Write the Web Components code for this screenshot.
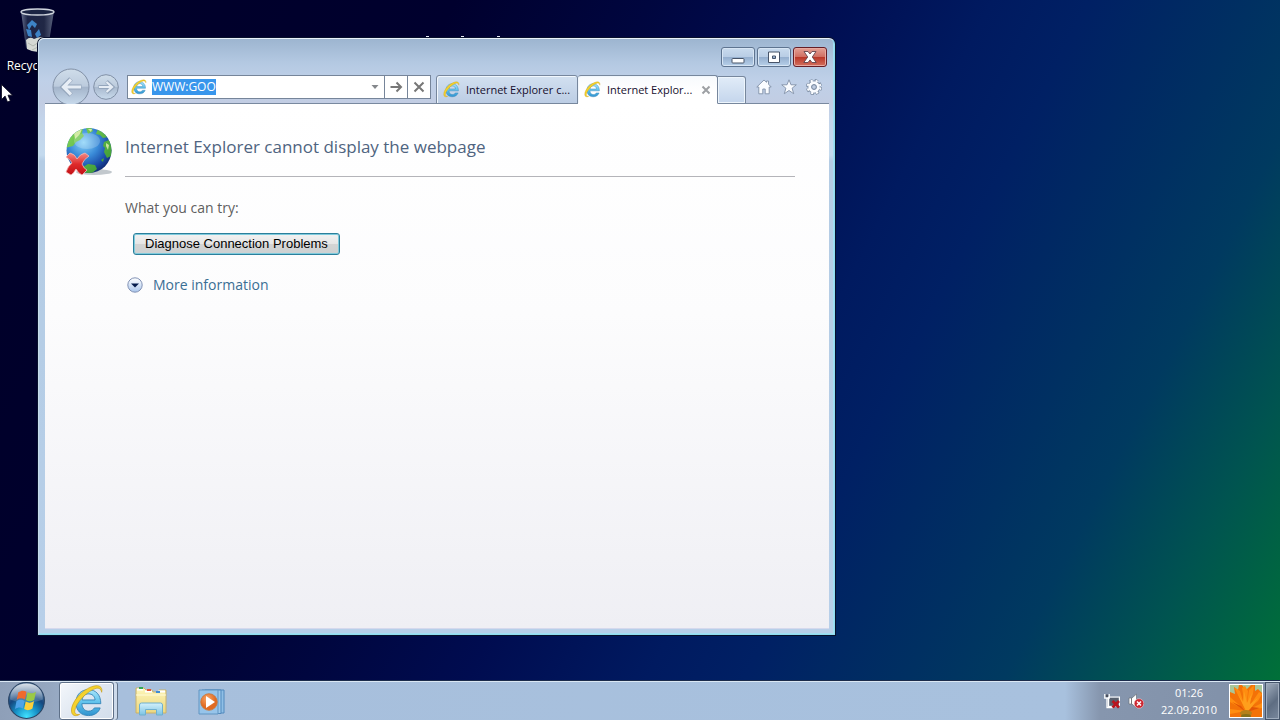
<!DOCTYPE html>
<html lang="en">
<head>
<meta charset="utf-8">
<title>Desktop</title>
<style>
html, body { height: 100%; margin: 0; }
body { font-family: "Open Sans", "Noto Sans", sans-serif; font-size: 12px; overflow: hidden; }
</style>
</head>
<body>
<win-desktop>
  <desktop-icon slot="icons" label="Recycle Bin"></desktop-icon>
  <browser-window slot="windows">
    <nav-bar slot="nav">
      <browser-tab slot="tabs">Internet Explorer c...</browser-tab>
      <browser-tab slot="tabs" active>Internet Explor...</browser-tab>
    </nav-bar>
    <error-page></error-page>
  </browser-window>
  <task-bar slot="taskbar"></task-bar>
</win-desktop>

<script>
const define = (name, html, setup) => {
  const template = document.createElement('template');
  template.innerHTML = html;
  customElements.define(name, class extends HTMLElement {
    connectedCallback() {
      if (this.shadowRoot) return;
      const root = this.attachShadow({ mode: 'open' });
      root.append(template.content.cloneNode(true));
      if (setup) setup.call(this, root);
    }
  });
};

const icons = {
  ie: `<svg viewBox="0 0 32 32"><defs><linearGradient id="b" x2="0" y2="1"><stop stop-color="#a8e4fa"/><stop offset=".5" stop-color="#5fc2ec"/><stop offset="1" stop-color="#2f93cf"/></linearGradient></defs>
    <path fill="url(#b)" stroke="#2f7fb4" stroke-width=".8" d="M29 18.500H11.200c.3 4.400 2.600 7 6.200 7 2.700 0 4.600-1.100 5.500-3h5.500C26.900 27 23 29.700 17.300 29.700 10.300 29.700 5.600 25 5.600 17.500S10.500 5.300 17.300 5.300 29 10 29 18.500zM11.400 15h12.200c-.4-3.600-2.600-5.700-6.100-5.700-3.400 0-5.500 2.100-6.100 5.700z"/>
    <path fill="#f5d22c" stroke="#c59a16" stroke-width=".6" d="M29.800 7.800C30.700 4 28.800 1.200 24.500 1.600 14.500 2.500 1 15.500 1.400 25.500c.2 4.200 3.500 5.500 7.700 3.100-3.300.6-5-.8-4.600-3.600C5.500 17.700 16.700 6.200 24.500 4.100c2.900-.8 4.700.7 5.300 3.700z"/></svg>`,
  back: `<svg viewBox="0 0 38 38"><defs><linearGradient id="g" x2="0" y2="1"><stop stop-color="#cfddea"/><stop offset=".48" stop-color="#bccbdd"/><stop offset=".5" stop-color="#a3b4ca"/><stop offset="1" stop-color="#c9dbed"/></linearGradient></defs><circle cx="19" cy="19" r="18" fill="url(#g)" stroke="#8190a6"/><path d="M29.500 19H12M19 11l-8 8 8 8" fill="none" stroke="#94a6bc" stroke-width="5"/><path d="M29 19H12M19 11.500l-7.500 7.500 7.500 7.500" fill="none" stroke="#e6edf5" stroke-width="3.200"/></svg>`,
  forward: `<svg viewBox="0 0 26 26"><defs><linearGradient id="g" x2="0" y2="1"><stop stop-color="#cfddea"/><stop offset=".48" stop-color="#bccbdd"/><stop offset=".5" stop-color="#a8b8cd"/><stop offset="1" stop-color="#c9dbed"/></linearGradient></defs><circle cx="13" cy="13" r="12.300" fill="url(#g)" stroke="#8190a6"/><path d="M5.500 13H19M13.500 7.500l6 5.500-6 5.500" fill="none" stroke="#94a6bc" stroke-width="3.800"/><path d="M6 13h12.500M13.500 8l5.500 5-5.500 5" fill="none" stroke="#e6edf5" stroke-width="2.200"/></svg>`,
  caret: `<svg viewBox="0 0 8 8"><path d="M.5 2h7L4 6z" fill="#85888c"/></svg>`,
  go: `<svg viewBox="0 0 14 14"><path d="M1.500 7h10M7.500 2.500L12 7l-4.500 4.500" fill="none" stroke="#777" stroke-width="2"/></svg>`,
  stop: `<svg viewBox="0 0 14 14"><path d="M2.500 2.500l9 9M11.500 2.500l-9 9" fill="none" stroke="#777" stroke-width="2"/></svg>`,
  tabclose: `<svg viewBox="0 0 10 10"><path d="M1.500 1.500l7 7M8.500 1.500l-7 7" fill="none" stroke="#9da0a4" stroke-width="2"/></svg>`,
  home: `<svg viewBox="0 0 16 16"><path d="M8 1L.8 8h2v6.800h4V10h2.400v4.800h4V8h2L12.500 5.200V2h-2v1.300z" fill="#fafcff" stroke="#8191a8" stroke-width=".9"/></svg>`,
  star: `<svg viewBox="0 0 16 16"><path d="M8 .8l2 5h5.300l-4.200 3.400 1.600 5.500L8 11.500l-4.700 3.200 1.600-5.500L.7 5.800H6z" fill="#fafcff" stroke="#8191a8" stroke-width=".9"/></svg>`,
  gear: `<svg viewBox="0 0 16 16"><circle cx="8" cy="8" r="6.500" fill="none" stroke="#73849b" stroke-width="3" stroke-dasharray="3.100 2"/><circle cx="8" cy="8" r="4.200" fill="none" stroke="#73849b" stroke-width="4.600"/><circle cx="8" cy="8" r="6.400" fill="none" stroke="#fafcff" stroke-width="2" stroke-dasharray="2.200 2.900" stroke-dashoffset="-.4"/><circle cx="8" cy="8" r="4.200" fill="none" stroke="#fafcff" stroke-width="3"/><circle cx="8" cy="8" r="2.300" fill="#c0cde2" stroke="#73849b" stroke-width=".8"/></svg>`,
  minimize: `<svg viewBox="0 0 16 16"><rect x="2" y="9.500" width="12" height="4.500" rx=".8" fill="#fff" stroke="#475469"/></svg>`,
  maximize: `<svg viewBox="0 0 16 16"><path fill-rule="evenodd" d="M2.500 3h11v10.500h-11zM6.500 7h3v2.500h-3z" fill="#fff" stroke="#475469"/></svg>`,
  close: `<svg viewBox="0 0 16 16"><path d="M2 2.500h4L8 5l2-2.500h4L10.300 8l3.900 5.500H10L8 10.900 6 13.500H1.800L5.700 8z" fill="#fff" stroke="#61444d" stroke-width=".9"/></svg>`,
  expand: `<svg viewBox="0 0 16 16"><defs><linearGradient id="g" x2="0" y2="1"><stop stop-color="#fff"/><stop offset=".5" stop-color="#d6e4f7"/><stop offset="1" stop-color="#a9c5ec"/></linearGradient></defs><circle cx="8" cy="8" r="7.200" fill="url(#g)" stroke="#8292b5"/><path d="M4 6.500h8L8 10.500z" fill="#061c4d"/></svg>`,
  globe: `<svg viewBox="0 0 48 50"><defs><radialGradient id="o" cx=".38" cy=".32" r=".72"><stop stop-color="#8bd4f9"/><stop offset=".45" stop-color="#3a8bd8"/><stop offset=".8" stop-color="#1a4ba7"/><stop offset="1" stop-color="#102a73"/></radialGradient><linearGradient id="l" x2="1" y2="1"><stop stop-color="#87d95c"/><stop offset="1" stop-color="#2f8f2f"/></linearGradient><linearGradient id="r" x2="0" y2="1"><stop stop-color="#f38b86"/><stop offset=".5" stop-color="#df2b2b"/><stop offset="1" stop-color="#c10e14"/></linearGradient><clipPath id="c"><circle cx="24" cy="24.500" r="22.500"/></clipPath></defs>
    <ellipse cx="29" cy="46" rx="18" ry="3" fill="#9aa3ac" opacity=".6"/><circle cx="24" cy="24.500" r="22.500" fill="url(#o)"/>
    <g clip-path="url(#c)"><path fill="url(#l)" d="M0 22V11L11 2l7 1-1 4 2 3-4 4-4 2-3 4-4 1zM21 2l5-1 2 4-5 3zM33 3l6 3 4 5-5 1-3-3-4-1zM39 16l5-2 5 8-3 8-4 2-3-6 1-4-2-2zM18 41l5-3 7 1 2 4-6 5-8 1zM36 34l3-2-1 4z"/><path d="M9 7l8-4-2 5-5 5zM23 3h4l-1 3zM41 17l3 2-1 5-2-4z" fill="#f0f4be" opacity=".75"/><ellipse cx="22" cy="15" rx="13" ry="8" fill="#fff" opacity=".2"/></g>
    <path d="M1 31l4-4q5 1 7 6 3-5 8-6l4 3q-5 3-7 8 2 5 5 6l-5 5q-4-2-6-6-2 4-5 6l-5-3q2-6 6-9-2-4-6-6z" fill="url(#r)" stroke="#f3bab8" stroke-width=".8"/></svg>`,
  start: `<svg viewBox="0 0 38 38"><defs><radialGradient id="o" cx=".5" cy=".95" r=".9"><stop stop-color="#41e2ff"/><stop offset=".35" stop-color="#1792c8"/><stop offset=".65" stop-color="#15477e"/><stop offset="1" stop-color="#5d7da0"/></radialGradient><linearGradient id="s" x2="0" y2="1"><stop stop-color="#fff" stop-opacity=".75"/><stop offset="1" stop-color="#fff" stop-opacity=".1"/></linearGradient></defs>
    <circle cx="19" cy="19" r="17.500" fill="url(#o)" stroke="#2a4464"/><path d="M3 18C3 8 10 2.500 19 2.500S35 8 35 18c-8 4-24 4-32 0z" fill="url(#s)"/>
    <path d="M11 11c3-2 5.500-2 8-.5l-1.500 7.500c-3-1.500-5.500-1.500-8 .3z" fill="#ef6a2d"/><path d="M20 11c3 1.600 5.200 1.300 8.200-.5l-1.600 7.700c-3 1.900-5.500 1.900-8.100.3z" fill="#9ac945"/><path d="M9.200 19.700c3-1.700 5.200-1.800 8-.3l-1.600 7.400c-2.700-1.500-4.800-1.300-7.800.5z" fill="#4fa3e8"/><path d="M18.200 20c2.900 1.600 5.200 1.500 8.200-.4l-1.600 7.300c-3.200 1.900-5.500 1.900-8.100.4z" fill="#fdd03a"/></svg>`,
  folder: `<svg viewBox="0 0 34 32"><defs><linearGradient id="f" x2="0" y2="1"><stop stop-color="#fdf6b9"/><stop offset="1" stop-color="#ecd780"/></linearGradient><linearGradient id="t" x2="0" y2="1"><stop stop-color="#d3f1fc"/><stop offset="1" stop-color="#7cc3e3"/></linearGradient></defs>
    <path d="M2 28V3h8l2 2h6l1 2h5l1-2h7v23z" fill="url(#f)" stroke="#c9b26b"/><path d="M3 4.500h6M11 6.500h7M24 6.500h7" stroke="#fff" stroke-width="2"/><path d="M5 2h4v2H5z" fill="#32a853"/><path d="M13 4h4v2h-4z" fill="#e25135"/><path d="M22 6h4v2h-4z" fill="#3e8bd5"/><path d="M2 10h30" stroke="#fffbd6"/>
    <path d="M5.500 30V20q0-2 2-2h19q2 0 2 2v10h-6v-5.500H11.500V30z" fill="url(#t)" stroke="#6fb0cf"/></svg>`,
  media: `<svg viewBox="0 0 30 30"><defs><radialGradient id="m" cx=".4" cy=".3"><stop stop-color="#f8a768"/><stop offset="1" stop-color="#e06a22"/></radialGradient></defs><path d="M9 4h19v23H9z" fill="#8fbfe6" stroke="#5189bd"/><path d="M6 4h19v23.500H6z" fill="#9dc9ec" stroke="#5189bd"/><path d="M3 4h19v24H3z" fill="#96c4ea" stroke="#6095c2"/><circle cx="13" cy="16" r="8.300" fill="url(#m)" stroke="#c97637" stroke-width=".8"/><path d="M10 10l9 6-9 6z" fill="#fff"/></svg>`,
  network: `<svg viewBox="0 0 16 16"><path d="M4.500 4h11v9.500h-11z" fill="#8d97a8" stroke="#fff" stroke-width="1.200"/><path d="M5.500 5h9v7.500h-9z" fill="#59616f"/><path d="M.8 1v4.200h4.400V1M3 5v9.500h7" fill="none" stroke="#fff" stroke-width="1.300"/><path d="M1.800 1.500h2.400V4H1.800z" fill="#4a4f5b"/><path d="M8.500 8l6.500 6.500M15 8l-6.500 6.500" stroke="#b9151f" stroke-width="2.800"/></svg>`,
  volume: `<svg viewBox="0 0 16 16"><path d="M1 5h3l4.500-4v14L4 11H1z" fill="#fff" stroke="#6a7078" stroke-width=".7"/><path d="M3.500 5v6" stroke="#777"/><circle cx="11" cy="10.500" r="4.800" fill="#cd2630" stroke="#ead4d6" stroke-width=".6"/><path d="M9 8.500l4 4M13 8.500l-4 4" stroke="#fff" stroke-width="1.500"/></svg>`,
  flower: `<svg viewBox="0 0 32 32"><rect width="32" height="32" fill="#f37208"/><path d="M0 0h9l-1 5-4-3 1 7-5-2zM12 0h9l-5 5zM25 0h7v8l-4-4-3 2z" fill="#a8c79a"/><g fill="#ff8d10"><path d="M16 26L4 2l6 4zM16 26L12 3l3-2 3 5zM16 26l3-21 5-5-1 9zM16 26L29 7l3 2-4 7zM16 26L0 12v5zM16 26l16-8v5zM16 26L0 24v5z"/></g><path d="M16 26L8 9l5 8 1-11 3 12 5-10-2 11 8-6-9 13z" fill="#ff9f1c"/><path d="M16 27L2 17l9 4zM17 27l13-4-8-1z" fill="#e25505"/><ellipse cx="16" cy="28" rx="6" ry="3" fill="#b5801a"/><ellipse cx="16" cy="31" rx="5" ry="2" fill="#86701a"/></svg>`,
  bin: `<svg viewBox="0 0 38 48"><defs><linearGradient id="g" x2="1"><stop stop-color="#77829d"/><stop offset=".2" stop-color="#222b4c"/><stop offset=".7" stop-color="#262e4a"/><stop offset="1" stop-color="#6b758e"/></linearGradient></defs><path d="M2 5l5 37q12 7 22 0l6-37z" fill="url(#g)" opacity=".85"/><path d="M7 34q4-4 8-1 8-4 15 0l-1 9q-10 7-21 1z" fill="#d4d8d3"/><path d="M9 37l5 3 6-4 3 5 5-4M13 44l6-3" fill="none" stroke="#b2b8b0"/><path d="M8 19l5-5 5 4-2 4-3-3-3 5zM7 23l5 1 1 7-4-1zM16 28l4-5 2 6-4 3z" fill="#3d83c6"/><ellipse cx="18.500" cy="6" rx="16.500" ry="3" fill="#1b2443" stroke="#cfd4dd" stroke-width="1.300"/></svg>`,
  pointer: `<svg viewBox="0 0 12 20"><path d="M.5.5v15l3.600-3.400L6.500 18l2.800-1.200L7 11.200h4.500z" fill="#fff" stroke="#0a0a1e" stroke-width=".8"/></svg>`,
  remnant: `<svg viewBox="0 0 78 2"><path d="M2 0h3v2H2zM37 0h3v2h-3zM73 0h3v2h-3z" fill="#e6eaf2"/></svg>`
};

define('ui-icon', `<style>:host{display:block;flex:none}svg{display:block;width:100%;height:100%}</style>`, function (root) {
  const holder = document.createElement('template');
  holder.innerHTML = icons[this.getAttribute('name')];
  const svg = holder.content.firstElementChild;
  svg.setAttribute('aria-hidden', 'true');
  root.append(svg);
});

define('win-desktop', `<style>
:host{display:flex;flex-direction:column;height:100vh;overflow:hidden}
.area{flex:1;min-height:0;position:relative;background:linear-gradient(117deg,#000028 0%,#00002e 28%,#00063f 40%,#000c50 50%,#001a60 61%,#002064 67%,#003062 77%,#003a60 83%,#005450 91%,#007038 100%)}
.pointer{position:absolute;left:1px;top:84px;width:12px;height:20px}
.remnant{position:absolute;left:424px;top:36px;width:78px;height:2px}
</style>
<main class="area"><slot name="icons"></slot><ui-icon class="remnant" name="remnant"></ui-icon><slot name="windows"></slot><ui-icon class="pointer" name="pointer"></ui-icon></main>
<slot name="taskbar"></slot>`);

define('desktop-icon', `<style>
:host{position:absolute;left:0;top:6px;width:76px;display:flex;flex-direction:column;align-items:center;gap:4px;color:#fff;text-shadow:0 1px 2px #000}
ui-icon{width:38px;height:48px}
span{line-height:16px;white-space:nowrap}
</style><ui-icon name="bin"></ui-icon><span></span>`, function (root) {
  root.querySelector('span').textContent = this.getAttribute('label');
});

define('browser-window', `<style>
:host{position:absolute;inset:38px 445px 46px 38px;box-sizing:border-box;display:flex;flex-direction:column;padding:0 5px 5px 6px;border:1px solid;border-color:#e8f1f9 #8fdcf0 #8fdcf0 #c7dcec;border-radius:6px 6px 0 0;box-shadow:0 0 0 1px #07102c,inset -1px -1px 0 #a3def1;
 background:linear-gradient(#9db5d0 0,#b4c9e2 24px,#bfd0e8 42px,#c2cde3 64px,#c3d4ea 80px,#c4daee 116px,#b4cce4 122px,#b7cfe9 100%)}
header{display:flex;justify-content:flex-end;gap:2px;height:20px;padding:8px 2px 1px}
button{box-sizing:border-box;width:34px;height:20px;padding:0;border:1px solid #5e7490;border-radius:3px;display:flex;align-items:center;justify-content:center;background:linear-gradient(#c9dbee,#b9cde5 48%,#94aece 50%,#b7d0e9);box-shadow:inset 0 0 0 1px #d7e5f4}
button.close{border-color:#651e27;background:linear-gradient(#e3a095,#d17063 48%,#b93526 50%,#d3705f);box-shadow:inset 0 0 0 1px #e8a9a0}
ui-icon{width:16px;height:16px}
.page{flex:1;min-height:0;display:flex;background:linear-gradient(#fff,#fcfcfd 40%,#efeff4);border-bottom:1px solid #d5d9ed}
</style>
<header><button aria-label="Minimize"><ui-icon name="minimize"></ui-icon></button><button aria-label="Maximize"><ui-icon name="maximize"></ui-icon></button><button class="close" aria-label="Close"><ui-icon name="close"></ui-icon></button></header>
<slot name="nav"></slot><div class="page"><slot></slot></div>`);

define('nav-bar', `<style>
:host{display:flex;align-items:flex-end;height:36px;overflow:hidden;box-sizing:border-box;padding-left:7px;background:linear-gradient(#79899f,#79899f) bottom/100% 1px no-repeat}
button{border:0;padding:0;margin:0;background:none;display:flex;align-items:center;justify-content:center}
.back{align-self:flex-start}.back ui-icon{width:38px;height:38px}
.forward{margin:0 8px 4px 3px}.forward ui-icon{width:26px;height:26px}
.address{flex:1;min-width:0;box-sizing:border-box;height:24px;margin:0 5px 5px 0;border:1px solid #76859a;background:#fff;display:flex;align-items:stretch}
.address ui-icon{align-self:center}
.fav{width:16px;height:16px;margin:0 5px 0 3px}
input{flex:1;min-width:0;border:0;padding:0;outline:0;background:none;font:12px/16px "Open Sans","Noto Sans",sans-serif;color:#222}
input::selection{background:#3896ec;color:#fff}
.drop{width:18px}.drop ui-icon{width:8px;height:8px}
.sq{width:23px;box-sizing:border-box;border-left:1px solid #76859a}.sq ui-icon{width:14px;height:14px}
.new{box-sizing:border-box;width:28px;height:28px;margin-right:10px;border:1px solid #77879d;border-left:0;border-radius:0 3px 0 0;background:linear-gradient(#e1ecf8,#c4d5ec);box-shadow:inset 0 0 0 1px #edf5fc}
.tools{display:flex;gap:9px;padding-bottom:9px;margin-right:7px}.tools ui-icon{width:16px;height:16px}
</style>
<button class="back" aria-label="Back"><ui-icon name="back"></ui-icon></button>
<button class="forward" aria-label="Forward"><ui-icon name="forward"></ui-icon></button>
<div class="address"><ui-icon class="fav" name="ie"></ui-icon><input type="text" value="WWW:GOO" aria-label="Address" spellcheck="false"><button class="drop" aria-label="Show history"><ui-icon name="caret"></ui-icon></button><button class="sq" aria-label="Go"><ui-icon name="go"></ui-icon></button><button class="sq" aria-label="Stop"><ui-icon name="stop"></ui-icon></button></div>
<slot name="tabs"></slot>
<button class="new" aria-label="New tab"></button>
<div class="tools"><button aria-label="Home"><ui-icon name="home"></ui-icon></button><button aria-label="Favorites"><ui-icon name="star"></ui-icon></button><button aria-label="Tools"><ui-icon name="gear"></ui-icon></button></div>`, function (root) {
  const input = root.querySelector('input');
  input.focus();
  input.select();
});

define('browser-tab', `<style>
:host{box-sizing:border-box;display:flex;align-items:center;width:142px;height:29px;padding:0 6px;gap:6px;border:1px solid #77879d;border-radius:3px 3px 0 0;background:linear-gradient(#d2e0f0,#bccde4);box-shadow:inset 1px 1px 0 #f1f7fd;color:#160f2e;white-space:nowrap;font-size:11px}
:host([active]){width:140px;background:linear-gradient(#f7fafd,#fff 60%);border-left:0;border-bottom-color:#fff}
span{flex:1;line-height:16px;overflow:hidden}
.fav{width:17px;height:17px}
button{display:none;border:0;padding:0;background:none}
:host([active]) button{display:block}
.x{width:10px;height:10px}
</style><ui-icon class="fav" name="ie"></ui-icon><span><slot></slot></span><button aria-label="Close tab"><ui-icon class="x" name="tabclose"></ui-icon></button>`);

define('error-page', `<style>
:host{flex:1;min-width:0;display:grid;grid-template-columns:48px minmax(0,1fr);column-gap:12px;align-content:start;padding:22px 34px 0 20px;color:#5f5f5f;font-size:14px}
.globe{width:48px;height:50px}
h1{margin:0;height:50px;border-bottom:1px solid #b4b4b9;font-weight:400;font-size:17px;line-height:42px;color:#4f6480}
section{grid-column:2;display:flex;flex-direction:column;align-items:flex-start}
p{margin:21px 0 15px;line-height:20px}
.diagnose{box-sizing:border-box;height:22px;margin-left:8px;padding:0 11px;border:1px solid #2c7f9b;border-radius:3px;background:linear-gradient(#f2f2f2,#e6e6e6 48%,#d4d4d4 50%,#cdd1d2);box-shadow:inset 0 0 0 1px #7fcbdd;font:13px/20px "Liberation Sans",Arial,sans-serif;color:#000}
.more{display:flex;align-items:center;gap:10px;margin:20px 0 0 2px;line-height:20px;color:#3a6e94;text-decoration:none}
.more ui-icon{width:16px;height:16px}
</style>
<ui-icon class="globe" name="globe"></ui-icon><h1>Internet Explorer cannot display the webpage</h1>
<section><p>What you can try:</p><button class="diagnose">Diagnose Connection Problems</button><a class="more" href="#more"><ui-icon name="expand"></ui-icon>More information</a></section>`);

define('task-bar', `<style>
:host{flex:none;box-sizing:border-box;display:flex;align-items:center;height:40px;margin-top:-1px;position:relative;border-top:1px solid #1b2b4a;box-shadow:inset 0 1px 0 #dbe8f4;background:linear-gradient(90deg,#8e9fb8 0,#95a7c0 50px,#a7bfdc 120px,#a8c1de calc(100% - 215px),#8696ae calc(100% - 180px),#8090a8 100%)}
button{border:0;padding:0;background:none;display:flex;align-items:center;justify-content:center}
.start{margin:0 13px 0 7px}.start ui-icon{width:39px;height:39px}
.active{box-sizing:border-box;width:55px;height:38px;border:1px solid #5e7088;border-radius:3px;background:linear-gradient(135deg,#f4f7fb,#dfe7f1 50%,#d3deeb);box-shadow:inset 0 0 0 1px #fff,3px 0 0 #cddaea,4px 0 0 #617389}
.active ui-icon{width:34px;height:34px}
.folder{margin-left:20px}.folder ui-icon{width:34px;height:32px}
.media{margin-left:28px}.media ui-icon{width:30px;height:30px}
.tray{margin-left:auto;display:flex;align-items:center;gap:8px}.tray ui-icon{width:16px;height:16px}
.clock{width:54px;margin:0 13px 0 18px;display:flex;flex-direction:column;align-items:center;color:#fff;font-size:11px;line-height:17px}
.user{box-sizing:border-box;width:34px;height:34px;border:1px solid #fff;margin-right:2px}
.show{box-sizing:border-box;width:15px;height:38px;border:1px solid #45556b;background:linear-gradient(135deg,#a1aebe,#5e6d82 55%,#79889d);box-shadow:inset 0 0 0 1px #9eabbc}
</style>
<button class="start" aria-label="Start"><ui-icon name="start"></ui-icon></button>
<button class="active" aria-label="Internet Explorer"><ui-icon name="ie"></ui-icon></button>
<button class="folder" aria-label="Windows Explorer"><ui-icon name="folder"></ui-icon></button>
<button class="media" aria-label="Windows Media Player"><ui-icon name="media"></ui-icon></button>
<div class="tray"><ui-icon name="network"></ui-icon><ui-icon name="volume"></ui-icon></div>
<div class="clock"><div>01:26</div><div>22.09.2010</div></div>
<ui-icon class="user" name="flower"></ui-icon><button class="show" aria-label="Show desktop"></button>`);
</script>
</body>
</html>
